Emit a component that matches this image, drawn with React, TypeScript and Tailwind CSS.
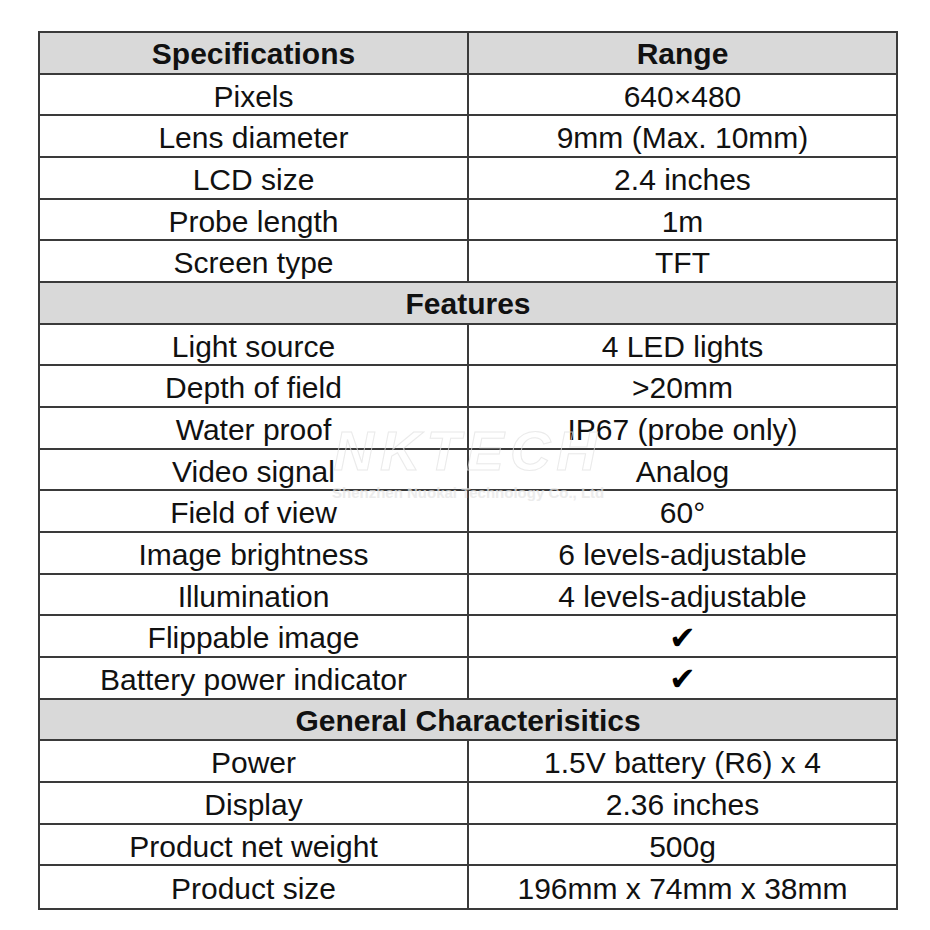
import React from 'react';

type Row = { kind: 'head'; title: string } | { kind: 'row'; label: string; value: string; check?: boolean };

const rows: Row[] = [
  { kind: 'row', label: 'Pixels', value: '640×480' },
  { kind: 'row', label: 'Lens diameter', value: '9mm (Max. 10mm)' },
  { kind: 'row', label: 'LCD size', value: '2.4 inches' },
  { kind: 'row', label: 'Probe length', value: '1m' },
  { kind: 'row', label: 'Screen type', value: 'TFT' },
  { kind: 'head', title: 'Features' },
  { kind: 'row', label: 'Light source', value: '4 LED lights' },
  { kind: 'row', label: 'Depth of field', value: '>20mm' },
  { kind: 'row', label: 'Water proof', value: 'IP67 (probe only)' },
  { kind: 'row', label: 'Video signal', value: 'Analog' },
  { kind: 'row', label: 'Field of view', value: '60°' },
  { kind: 'row', label: 'Image brightness', value: '6 levels-adjustable' },
  { kind: 'row', label: 'Illumination', value: '4 levels-adjustable' },
  { kind: 'row', label: 'Flippable image', value: '✔', check: true },
  { kind: 'row', label: 'Battery power indicator', value: '✔', check: true },
  { kind: 'head', title: 'General Characterisitics' },
  { kind: 'row', label: 'Power', value: '1.5V battery (R6) x 4' },
  { kind: 'row', label: 'Display', value: '2.36 inches' },
  { kind: 'row', label: 'Product net weight', value: '500g' },
  { kind: 'row', label: 'Product size', value: '196mm x 74mm x 38mm' },
];

export default function App() {
  return (
    <div className="w-[930px] h-[930px] bg-white pt-[31px] pl-[38px] font-['Liberation_Sans',Arial,sans-serif] text-[30px] text-[#111]">
      <div className="relative w-[860px] h-[879px] border-2 border-[#3a3a3a] grid grid-cols-[429px_1fr] grid-rows-[repeat(21,minmax(0,1fr))]">
        <div className="flex items-center justify-center pt-[2px] bg-[#d9d9d9] font-bold border-r-2 border-b-2 border-[#3a3a3a]">Specifications</div>
        <div className="flex items-center justify-center pt-[2px] bg-[#d9d9d9] font-bold border-b-2 border-[#3a3a3a]">Range</div>
        {rows.map((r, i) => {
          const last = i === rows.length - 1;
          if (r.kind === 'head') {
            return (
              <div key={i} className="col-span-2 flex items-center justify-center pt-[2px] bg-[#d9d9d9] font-bold border-b-2 border-[#3a3a3a]">
                {r.title}
              </div>
            );
          }
          return (
            <React.Fragment key={i}>
              <div className={`flex items-center justify-center pt-[3px] border-r-2 border-[#3a3a3a] ${last ? '' : 'border-b-2'}`}>{r.label}</div>
              <div className={`flex items-center justify-center pt-[3px] border-[#3a3a3a] ${last ? '' : 'border-b-2'}`}>
                {r.check ? <span className="font-['DejaVu_Sans',sans-serif] text-[32px] leading-none text-black">{r.value}</span> : r.value}
              </div>
            </React.Fragment>
          );
        })}
        {/* faint watermark */}
        <div className="absolute left-[292px] top-[390px] pointer-events-none flex flex-col items-center opacity-70">
          <span className="italic font-bold text-[56px] tracking-[6px] text-transparent [-webkit-text-stroke:1px_#e2e2e2] leading-none">NKTECH</span>
          <span className="font-bold text-[15px] text-[#e4e4e4] leading-none mt-[6px]">Shenzhen Nuokai Technology Co., Ltd</span>
        </div>
      </div>
    </div>
  );
}
